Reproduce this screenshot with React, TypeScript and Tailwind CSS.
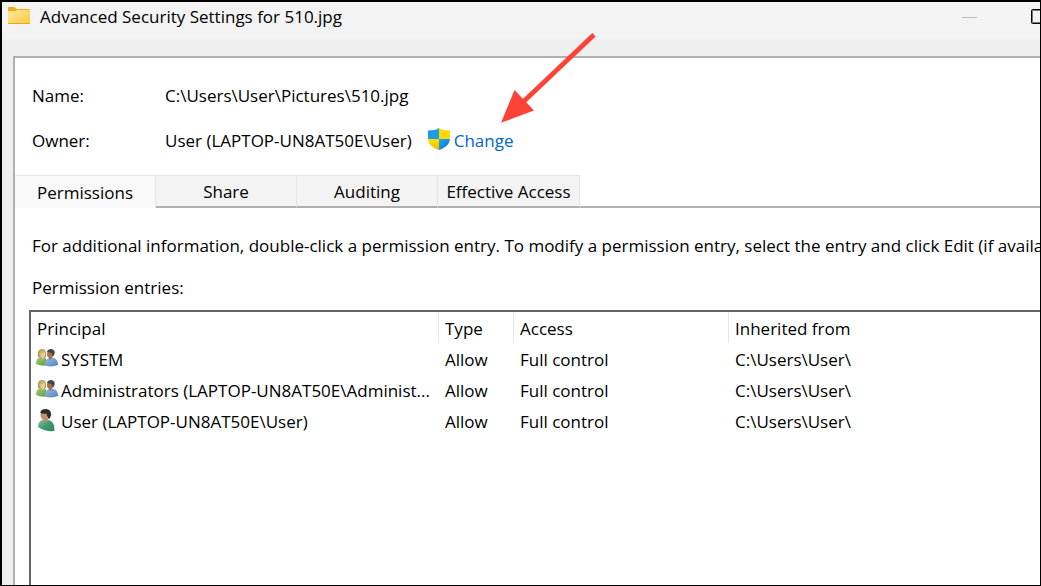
import { useState } from 'react';

const tabs = [
  { name: 'Permissions', width: 'w-[141px]' },
  { name: 'Share', width: 'w-[141px]' },
  { name: 'Auditing', width: 'w-[141px]' },
  { name: 'Effective Access', width: 'w-[142px]' },
];

const entries = [
  { principal: 'SYSTEM', group: true },
  { principal: 'Administrators (LAPTOP-UN8AT50E\\Administ...', group: true },
  { principal: 'User (LAPTOP-UN8AT50E\\User)', group: false },
];

function FolderIcon() {
  return (
    <svg className="mb-0.5 shrink-0" width="22" height="18" viewBox="0 0 22 18" aria-hidden="true">
      <defs>
        <linearGradient id="folder" x1="0" y1="0" x2="1" y2="1">
          <stop offset="0" stopColor="#ffe8a0" />
          <stop offset="1" stopColor="#fdc93c" />
        </linearGradient>
      </defs>
      <path d="M0 1Q0 0 1 0H6.5L8.5 2H21Q22 2 22 3V8H0Z" fill="#f3ac16" />
      <path d="M0 4H7.5L9 3H22V16Q22 17 21 17H1Q0 17 0 16Z" fill="url(#folder)" />
      <path d="M0 16.5H22" stroke="#e7a71f" />
    </svg>
  );
}

function ShieldIcon() {
  return (
    <svg className="mb-1 shrink-0" width="22" height="22" viewBox="0 0 22 22" aria-hidden="true">
      <defs>
        <linearGradient id="shieldBlue" x1="0" y1="0" x2="1" y2="1">
          <stop offset="0" stopColor="#22a8ee" />
          <stop offset="1" stopColor="#0872cc" />
        </linearGradient>
        <linearGradient id="shieldGold" x1="0" y1="0" x2="0" y2="1">
          <stop offset="0" stopColor="#ffe000" />
          <stop offset="1" stopColor="#f5b800" />
        </linearGradient>
        <clipPath id="shieldShape">
          <path d="M11 0C8.5 2 4.5 2.4 0 2.4V10C0 16.5 5 20 11 22C17 20 22 16.5 22 10V2.4C17.5 2.4 13.5 2 11 0Z" />
        </clipPath>
      </defs>
      <g clipPath="url(#shieldShape)">
        <rect width="11" height="11" fill="#1b9de6" />
        <rect x="11" width="11" height="11" fill="#ffd90a" />
        <rect y="11" width="11" height="11" fill="url(#shieldGold)" />
        <rect x="11" y="11" width="11" height="11" fill="url(#shieldBlue)" />
      </g>
    </svg>
  );
}

function GroupIcon() {
  return (
    <svg className="mb-1 shrink-0" width="22" height="20" viewBox="0 0 22 20" aria-hidden="true">
      <defs>
        <linearGradient id="green" x1="0" y1="0" x2="1" y2="1">
          <stop offset="0" stopColor="#a5ca7b" />
          <stop offset="1" stopColor="#5f963a" />
        </linearGradient>
        <linearGradient id="blue" x1="0" y1="0" x2="1" y2="1">
          <stop offset="0" stopColor="#94b9e0" />
          <stop offset="1" stopColor="#5585bd" />
        </linearGradient>
      </defs>
      <path d="M2 9C1.5 4 2.5 1 6 1S10.5 4 10 9Q6 11 2 9Z" fill="#b79b4c" />
      <path d="M0 16Q0 10 4 9.5H8Q11.5 10.5 12 17Q6 19 0 16Z" fill="url(#green)" />
      <path d="M4.5 8H8L7 12Z" fill="#e4bd97" />
      <ellipse cx="6.6" cy="6" rx="2.6" ry="3.4" fill="#edc8a4" />
      <path d="M3 6Q4 1.5 9 3Q7.5 5 5 5.5L4 8Z" fill="#cbb368" />
      <path d="M9 17.5Q9 11 13 10H18Q22 11.5 22 17Q16 19.5 9 17.5Z" fill="url(#blue)" />
      <path d="M12.5 8.5H17L14 12Z" fill="#9a6849" />
      <ellipse cx="14" cy="6" rx="3" ry="3.8" fill="#a47250" />
      <path d="M10.8 3.5Q12 0.8 15 1Q19.5 1.5 18.5 6L17 9L15.5 5Q13 4.8 10.8 3.5Z" fill="#4a4441" />
    </svg>
  );
}

function UserIcon() {
  return (
    <svg className="mx-0.5 mb-1 shrink-0" width="18" height="24" viewBox="0 0 18 24" aria-hidden="true">
      <defs>
        <linearGradient id="shirt" x1="0" y1="0" x2="1" y2="1">
          <stop offset="0" stopColor="#8cc0a6" />
          <stop offset="0.5" stopColor="#3f9a70" />
          <stop offset="1" stopColor="#2a8a5d" />
        </linearGradient>
      </defs>
      <path d="M0 19Q0 13 4.5 12H11Q16.5 13.5 16.5 23Q7 24 0 19Z" fill="url(#shirt)" />
      <path d="M4.5 10H11L7 15Z" fill="#bd8c69" />
      <ellipse cx="6.3" cy="7" rx="3.8" ry="4.8" fill="#c08f6b" />
      <path d="M2.3 5Q2.5 1 8 1Q13.5 1.5 13 7Q12.5 10 11 11L9.5 9L8.5 5.5Q5 6 2.3 5Z" fill="#302b28" />
    </svg>
  );
}

export default function App() {
  const [active, setActive] = useState('Permissions');
  return (
    <div className="relative flex min-h-screen flex-col overflow-hidden border-t-2 border-r border-b border-l-2 border-black bg-[#efefef] font-['Open_Sans','Noto_Sans',sans-serif] text-[17px] leading-6 whitespace-nowrap text-black">
      <header className="flex h-[37px] items-start justify-between bg-[#f3f3f3] pt-[3px] pl-1.5">
        <div className="flex items-center gap-2.5">
          <FolderIcon />
          <h1 className="text-[17px]">Advanced Security Settings for 510.jpg</h1>
        </div>
        <div className="flex items-center gap-[54px] pt-1">
          <button type="button" aria-label="Minimize" className="flex h-4 w-[15px] items-center">
            <span className="h-px w-full bg-[#bdbdbd]" />
          </button>
          <button type="button" aria-label="Maximize" className="h-4 w-[9px] overflow-hidden">
            <svg width="16" height="16" viewBox="0 0 16 16" aria-hidden="true">
              <rect x="0.5" y="0.5" width="14" height="14" rx="1" fill="none" stroke="#000" />
              <rect x="1.5" y="1.5" width="12" height="12" fill="none" stroke="#777" />
            </svg>
          </button>
        </div>
      </header>

      <main className="mt-[17px] ml-[11px] flex flex-1 flex-col border-t-2 border-l-2 border-[#b0b0b0] bg-white">
        <dl className="grid grid-cols-[133px_1fr] grid-rows-[24px_24px] gap-y-[21px] pt-[26px] pb-[22px] pl-[17px]">
          <dt>Name:</dt>
          <dd>C:\Users\User\Pictures\510.jpg</dd>
          <dt>Owner:</dt>
          <dd className="flex items-center gap-4">
            User (LAPTOP-UN8AT50E\User)
            <a href="#change" className="flex items-center gap-1 text-[#0066cc]">
              <ShieldIcon />
              Change
            </a>
          </dd>
        </dl>

        <div role="tablist" className="flex h-[33px]">
          {tabs.map((tab) => (
            <button
              key={tab.name}
              type="button"
              role="tab"
              aria-selected={active === tab.name}
              onClick={() => setActive(tab.name)}
              className={`${tab.width} border-t border-r border-t-[#e5e5e5] border-r-[#e5e5e5] pt-0.5 ${
                active === tab.name ? 'bg-[#f9f9f9]' : 'border-b-2 border-b-[#b0b0b0] bg-[#f3f3f3]'
              }`}
            >
              {tab.name}
            </button>
          ))}
          <div className="flex-1 border-b-2 border-[#b0b0b0]" />
        </div>

        <section className="flex flex-1 flex-col pt-[26px] pl-3.5">
          <p className="w-0 pl-[3px]">
            For additional information, double-click a permission entry. To modify a permission entry, select the entry and click Edit (if available).
          </p>
          <h2 id="entries" className="mt-[18px] pl-[3px]">Permission entries:</h2>
          <div className="mt-[10px] flex-1 border-t-2 border-l-2 border-[#646464]">
            <table aria-labelledby="entries" className="w-full table-fixed border-separate border-spacing-0 text-left">
              <thead>
                <tr className="h-[31px]">
                  <th className="w-[408px] border-r border-[#e5e5e5] pt-0.5 pl-1.5 font-normal">Principal</th>
                  <th className="w-[75px] border-r border-[#e5e5e5] pt-0.5 pl-1.5 font-normal">Type</th>
                  <th className="w-[215px] border-r border-[#e5e5e5] pt-0.5 pl-1.5 font-normal">Access</th>
                  <th className="pt-0.5 pl-1.5 font-normal">Inherited from</th>
                </tr>
              </thead>
              <tbody>
                {entries.map((entry) => (
                  <tr key={entry.principal} className="h-[31px]">
                    <td className="pt-0.5 pl-[5px]">
                      <span className="flex h-6 items-center gap-[3px]">
                        {entry.group ? <GroupIcon /> : <UserIcon />}
                        {entry.principal}
                      </span>
                    </td>
                    <td className="pt-0.5 pl-1.5">Allow</td>
                    <td className="pt-0.5 pl-1.5">Full control</td>
                    <td className="pt-0.5 pl-1.5">C:\Users\User\</td>
                  </tr>
                ))}
              </tbody>
            </table>
          </div>
        </section>
      </main>

      <svg className="pointer-events-none absolute top-[30px] left-[498px]" width="100" height="96" viewBox="0 0 100 96" aria-hidden="true">
        <path d="M94 2.8L22 71" stroke="#ff4236" strokeWidth="4.8" />
        <path d="M1 90.8L14.5 58L34 78.5Z" fill="#ff4236" />
      </svg>
    </div>
  );
}
